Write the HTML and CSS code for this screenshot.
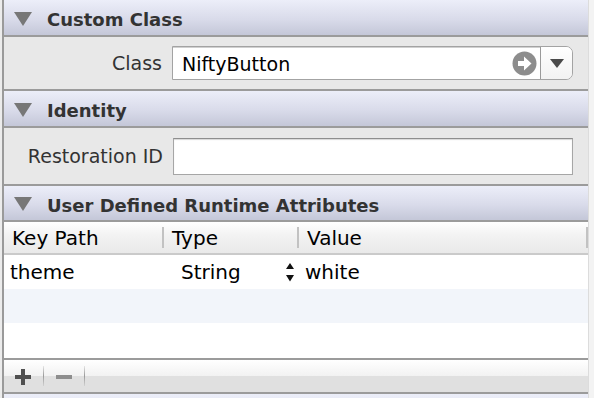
FILE: index.html
```html
<!DOCTYPE html>
<html>
<head>
<meta charset="utf-8">
<link rel="stylesheet" href="styles.css">
</head>
<body>
<div class="frame">
  <div class="panel">
    <div class="sec-head">
      <svg class="disclosure" width="18" height="14" viewBox="0 0 18 14"><path d="M0 0 H18 L9 14 Z" fill="#777"/></svg>
      <span>Custom Class</span>
    </div>
    <div class="sec-body body-class">
      <label class="field-label">Class</label>
      <div class="combo">
        <div class="combo-input">
          <span>NiftyButton</span>
          <svg class="goto" width="25" height="25" viewBox="0 0 25 25"><circle cx="12.5" cy="12.5" r="12" fill="#8d8d8d"/><path d="M6 10 H12 V5.5 L19.5 12.5 L12 19.5 V15 H6 Z" fill="#fff"/></svg>
        </div>
        <div class="combo-btn">
          <svg width="14" height="9" viewBox="0 0 14 9"><path d="M0 0 H14 L7 9 Z" fill="#4a4a4a"/></svg>
        </div>
      </div>
    </div>
    <div class="sec-head">
      <svg class="disclosure" width="18" height="14" viewBox="0 0 18 14"><path d="M0 0 H18 L9 14 Z" fill="#777"/></svg>
      <span>Identity</span>
    </div>
    <div class="sec-body body-ident">
      <label class="field-label">Restoration ID</label>
      <div class="textbox"></div>
    </div>
    <div class="sec-head head-short">
      <svg class="disclosure" width="18" height="14" viewBox="0 0 18 14"><path d="M0 0 H18 L9 14 Z" fill="#777"/></svg>
      <span>User Defined Runtime Attributes</span>
    </div>
    <div class="table">
      <div class="thead">
        <div class="th col1">Key Path</div>
        <div class="vsep"></div>
        <div class="th col2">Type</div>
        <div class="vsep"></div>
        <div class="th col3">Value</div>
        <div class="vsep"></div>
      </div>
      <div class="tr">
        <div class="td col1">theme</div>
        <div class="td col2 type-cell">
          <span>String</span>
          <svg class="stepper" width="8" height="19" viewBox="0 0 8 19"><path d="M4 0 L8 6 H0 Z M0 12 H8 L4 18.5 Z" fill="#111"/></svg>
        </div>
        <div class="td col3 val">white</div>
      </div>
      <div class="tr alt"></div>
      <div class="tr last"></div>
    </div>
    <div class="toolbar">
      <svg class="plus" width="16" height="16" viewBox="0 0 16 16"><path d="M6 0 H10 V6 H16 V10 H10 V16 H6 V10 H0 V6 H6 Z" fill="#505050"/></svg>
      <div class="tsep"></div>
      <svg class="minus" width="16" height="4" viewBox="0 0 16 4"><rect width="16" height="4" fill="#8e8e8e"/></svg>
      <div class="tsep"></div>
    </div>
    <div class="sec-head tail"></div>
  </div>
  <div class="edge"></div>
</div>
</body>
</html>
```

FILE: styles.css
```css
html, body {
  margin: 0;
  padding: 0;
}
body {
  width: 594px;
  height: 398px;
  overflow: hidden;
  background: #ececec;
  font-family: "DejaVu Sans", "Liberation Sans", sans-serif;
  color: #111;
}
.frame {
  display: flex;
  height: 398px;
}
.panel {
  margin-left: 2px;
  border-left: 2px solid #9a9a9a;
  width: 584px;
  display: flex;
  flex-direction: column;
  background: #e8e8e8;
}
.edge {
  width: 5px;
  border-left: 1px solid #dcdcdc;
  background: #f3f3f3;
}
.sec-head {
  height: 35px;
  flex: none;
  border-bottom: 2px solid #9b9b9b;
  background: linear-gradient(#eceef9, #d9dbea 55%, #c4c7d8);
  display: flex;
  align-items: center;
  padding-left: 10px;
  font-weight: bold;
  font-size: 18px;
  color: #333;
}
.head-short {
  height: 34px;
}
.sec-head span {
  margin-left: 15px;
  padding-top: 4px;
}
.disclosure {
  flex: none;
  margin-top: 2px;
}
.tail {
  height: 10px;
  border-bottom: none;
  background: linear-gradient(#eceef9, #e6e8f4);
}
.sec-body {
  flex: none;
  border-bottom: 2px solid #9b9b9b;
  display: flex;
  align-items: center;
  background: #e8e8e8;
}
.body-class {
  height: 52px;
}
.body-ident {
  height: 56px;
}
.field-label {
  width: 158px;
  text-align: right;
  font-size: 19px;
  color: #333;
  flex: none;
}
.body-ident .field-label {
  width: 159px;
}
.combo {
  margin-left: 10px;
  width: 401px;
  height: 34px;
  box-sizing: border-box;
  border: 1px solid #a3a3a3;
  border-radius: 0 7px 7px 0;
  display: flex;
  background: #fff;
  overflow: hidden;
}
.combo-input {
  flex: 1;
  display: flex;
  align-items: center;
  justify-content: space-between;
  padding-left: 9px;
  padding-right: 3px;
  font-size: 19px;
  color: #000;
  border-top: 1px solid #d0d0d0;
}
.goto {
  margin-top: -1px;
}
.combo-btn {
  width: 31px;
  flex: none;
  border-left: 1px solid #9a9a9a;
  background: linear-gradient(#ffffff, #f2f2f2);
  display: flex;
  align-items: center;
  justify-content: center;
}
.textbox {
  margin-left: 10px;
  width: 400px;
  height: 37px;
  box-sizing: border-box;
  border: 1px solid #a6a6a6;
  border-top-color: #8e8e8e;
  box-shadow: inset 0 1px 1px #d8d8d8;
  background: #fff;
}
.table {
  flex: none;
  background: #fff;
  font-size: 20px;
}
.thead {
  height: 31px;
  border-bottom: 2px solid #cacaca;
  background: linear-gradient(#ffffff, #f3f3f3 40%, #e9e9e9);
  display: flex;
  align-items: center;
}
.th {
  padding-left: 8px;
  box-sizing: border-box;
  color: #000;
}
.th.col1 { width: 158px; }
.th.col2 { width: 133px; }
.th.col3 { width: 287px; }
.vsep {
  width: 2px;
  height: 21px;
  background: #c2c2c2;
  flex: none;
}
.tr {
  height: 34px;
  display: flex;
  align-items: center;
  background: #fff;
}
.tr.alt {
  background: #f2f5fa;
}
.tr.last {
  height: 35px;
}
.td {
  box-sizing: border-box;
  color: #000;
}
.td.col1 { width: 160px; padding-left: 6px; }
.td.col2 { width: 135px; padding-left: 17px; }
.td.col3 { padding-left: 6px; }
.type-cell {
  display: flex;
  align-items: center;
  justify-content: space-between;
  padding-right: 5px;
}
.toolbar {
  flex: none;
  height: 32px;
  border-top: 2px solid #9b9b9b;
  border-bottom: 2px solid #9b9b9b;
  background: linear-gradient(#ffffff, #f2f2f2 50%, #e0e0e0 50%, #e0e0e0);
  display: flex;
  align-items: center;
  padding-left: 11px;
}
.plus {
  margin-top: 1px;
}
.tsep {
  width: 1px;
  height: 20px;
  background: linear-gradient(rgba(150,150,150,0.2), #9a9a9a 50%, rgba(150,150,150,0.2));
  margin: 0 12px;
}
.minus {
  margin-top: 2px;
}
```
